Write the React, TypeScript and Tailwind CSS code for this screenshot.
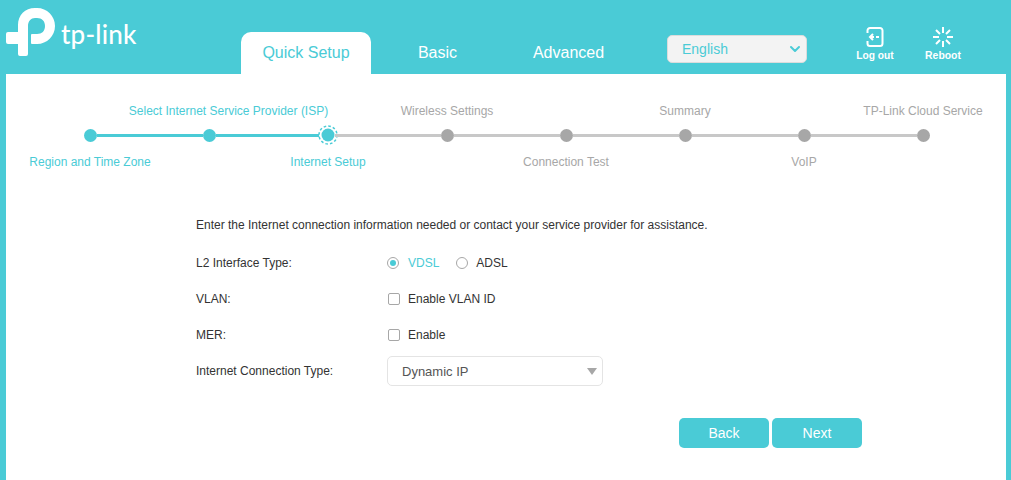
import { ChevronDown } from "lucide-react";

const font = "font-['Liberation_Sans',Arial,sans-serif]";

const topSteps = ["", "Select Internet Service Provider (ISP)", "", "Wireless Settings", "", "Summary", "", "TP-Link Cloud Service"];
const bottomSteps = ["Region and Time Zone", "", "Internet Setup", "", "Connection Test", "", "VoIP", ""];

function Logo() {
  return (
    <div className="flex items-start pl-[6px] pt-[7px]">
      <svg width="50" height="50" viewBox="6 7 50 50" className="shrink-0">
        <path
          d="M18 32H8a2 2 0 0 0-2 2v8a2 2 0 0 0 2 2h10v10a2 2 0 0 0 2 2h6a2 2 0 0 0 2-2V26C28 21 31 18 35 18h2C42 18 45 21 45 26 45 31 42 34 37 34h-5a1 1 0 0 0-1 1v8a1 1 0 0 0 1 1h5C47 44 55 36 55 26 55 16 47 8 37 8h-2C25 8 18 15 18 25z"
          fill="#fff"
        />
      </svg>
      <span className="ml-[5px] mt-[11px] font-['Lato',sans-serif] text-[26px] leading-[32px] font-medium tracking-[0.2px] text-white">
        tp-link
      </span>
    </div>
  );
}

function LogoutIcon() {
  return (
    <svg width="20" height="20" viewBox="0 0 20 20" fill="none" stroke="#fff" strokeWidth="2">
      <path d="M2.500 6V3.500A2.500 2.500 0 0 1 5 1h10a2.500 2.500 0 0 1 2.500 2.500v13A2.500 2.500 0 0 1 15 19H5a2.500 2.500 0 0 1-2.500-2.500V14" />
      <path d="M11 10h3" />
      <path d="M5 10h4" />
      <path d="M8 7l-3 3 3 3" />
    </svg>
  );
}

function RebootIcon() {
  return (
    <svg width="22" height="20" viewBox="0 0 22 20" fill="none" stroke="#fff" strokeWidth="2">
      <path d="M11 0v6M11 14v6M1 10h6M15 10h6M4 3l4 4M18 3l-4 4M4 17l4-4M18 17l-4-4" />
    </svg>
  );
}

function CurrentDot() {
  return (
    <svg width="20" height="20" viewBox="0 0 20 20" className="-mx-[3.500px] shrink-0">
      <circle cx="10" cy="10" r="9" fill="#fff" stroke="#4acbd6" strokeWidth="1.500" strokeDasharray="2.600 2.110" />
      <circle cx="10" cy="10" r="6.500" fill="#4acbd6" />
    </svg>
  );
}

function Radio({ checked }: { checked?: boolean }) {
  return (
    <span className="flex h-3 w-3 items-center justify-center rounded-full border border-[#a7a7a7] bg-white">
      {checked && <span className="h-[6px] w-[6px] rounded-full bg-[#4acbd6]" />}
    </span>
  );
}

function Checkbox() {
  return <span className="ml-px h-3 w-3 rounded-[2px] border border-[#a7a7a7] bg-white" />;
}

function FormRow({ label, children }: { label: string; children: React.ReactNode }) {
  return (
    <div className="flex items-center">
      <div className="w-[191px] text-[#333]">{label}</div>
      {children}
    </div>
  );
}

export default function App() {
  return (
    <div className={`${font} h-[480px] w-[1011px] overflow-hidden bg-[#4acbd6]`}>
      {/* header */}
      <div className="flex h-[74px]">
        <div className="w-[241px]">
          <Logo />
        </div>
        <div className="flex items-end">
          <div className="flex h-[42px] w-[130px] items-center justify-center rounded-t-[10px] bg-white text-[16px] text-[#4acbd6]">
            Quick Setup
          </div>
          <div className="flex h-[42px] w-[131px] items-center justify-center pl-[2px] text-[16px] text-white">Basic</div>
          <div className="flex h-[42px] w-[131px] items-center justify-center pl-[2px] text-[16px] text-white">Advanced</div>
        </div>
        <div className="ml-[34px] mt-[35px] flex h-[28px] w-[140px] items-center justify-between rounded-[5px] border border-[#dcdcdc] bg-[#f3f3f3] pl-[14px] pr-[3px] text-[14px] text-[#4acbd6]">
          English
          <ChevronDown size={16} strokeWidth={3} color="#4acbd6" />
        </div>
        <div className="ml-[44px] mt-[27px] flex w-[48px] flex-col items-center font-bold text-white">
          <LogoutIcon />
          <span className="mt-[2px] whitespace-nowrap text-[10.2px] leading-[13px]">Log out</span>
        </div>
        <div className="ml-[20px] mt-[27px] flex w-[48px] flex-col items-center font-bold text-white">
          <RebootIcon />
          <span className="mt-[2px] whitespace-nowrap text-[10.4px] leading-[13px]">Reboot</span>
        </div>
      </div>

      {/* panel */}
      <div className="ml-[6px] h-[406px] w-[1000px] bg-white text-[12px]">
        <div className="pl-[24.500px] pt-[28px]">
          <div className="grid h-[16px] grid-cols-[repeat(8,119px)] items-center">
            {topSteps.map((s, i) => (
              <div
                key={i}
                className={`flex justify-center whitespace-nowrap ${i === 1 ? "pl-[39px]" : ""} ${i < 2 ? "text-[#4acbd6]" : "text-[#a7a7a7]"}`}
              >
                {s}
              </div>
            ))}
          </div>
          <div className="mt-[6px] flex h-[22px] items-center pl-[53px]">
            <span className="h-[13px] w-[13px] shrink-0 rounded-full bg-[#4acbd6]" />
            <span className="h-[3px] w-[106px] bg-[#4acbd6]" />
            <span className="h-[13px] w-[13px] shrink-0 rounded-full bg-[#4acbd6]" />
            <span className="h-[3px] w-[106px] bg-[#4acbd6]" />
            <CurrentDot />
            {[0, 1, 2, 3, 4].map((i) => (
              <div key={i} className="flex items-center">
                <span className="h-[3px] w-[106px] bg-[#c8c8c8]" />
                <span className="h-[13px] w-[13px] shrink-0 rounded-full bg-[#a7a7a7]" />
              </div>
            ))}
          </div>
          <div className="mt-[7px] grid h-[16px] grid-cols-[repeat(8,119px)] items-center">
            {bottomSteps.map((s, i) => (
              <div key={i} className={`flex justify-center whitespace-nowrap ${i < 3 ? "text-[#4acbd6]" : "text-[#a7a7a7]"}`}>
                {s}
              </div>
            ))}
          </div>
        </div>

        <div className="ml-[190px] mt-[48px] w-[680px]">
          <p className="leading-[16px] text-[#333]">
            Enter the Internet connection information needed or contact your service provider for assistance.
          </p>
          <div className="mt-[12px] flex flex-col">
            <div className="flex h-[36px] items-center">
              <FormRow label="L2 Interface Type:">
                <Radio checked />
                <span className="ml-[9px] text-[#4acbd6]">VDSL</span>
                <span className="ml-[17px]">
                  <Radio />
                </span>
                <span className="ml-[8px] text-[#333]">ADSL</span>
              </FormRow>
            </div>
            <div className="flex h-[36px] items-center">
              <FormRow label="VLAN:">
                <Checkbox />
                <span className="ml-[8px] text-[#333]">Enable VLAN ID</span>
              </FormRow>
            </div>
            <div className="flex h-[36px] items-center">
              <FormRow label="MER:">
                <Checkbox />
                <span className="ml-[8px] text-[#333]">Enable</span>
              </FormRow>
            </div>
            <div className="flex h-[36px] items-center">
              <FormRow label="Internet Connection Type:">
                <div className="flex h-[30px] w-[216px] items-center justify-between rounded-[5px] border border-[#e4e4e4] pl-[14px] pr-[5px] pt-px text-[13px] text-[#555]">
                  Dynamic IP
                  <span className="h-0 w-0 border-x-[5px] border-t-[7px] border-x-transparent border-t-[#a7a7a7]" />
                </div>
              </FormRow>
            </div>
          </div>
          <div className="ml-[483px] mt-[29px] flex gap-[3px]">
            <button className="h-[30px] w-[90px] rounded-[5px] bg-[#4acbd6] text-[14px] text-white">Back</button>
            <button className="h-[30px] w-[90px] rounded-[5px] bg-[#4acbd6] text-[14px] text-white">Next</button>
          </div>
        </div>
      </div>
    </div>
  );
}
